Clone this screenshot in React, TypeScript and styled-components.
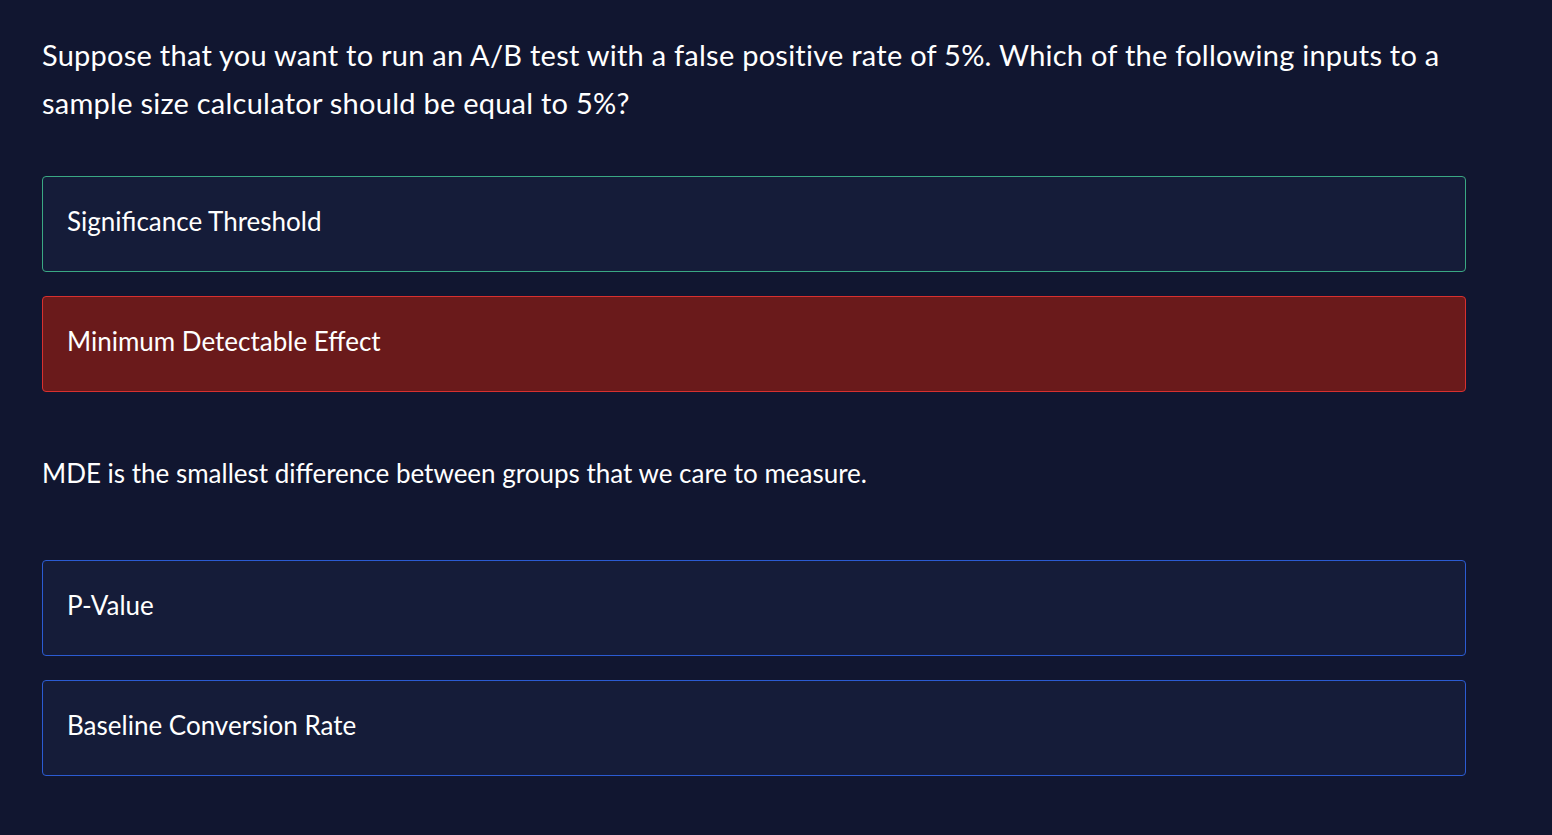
import React from "react";
import styled, { createGlobalStyle } from "styled-components";

const Global = createGlobalStyle`
  html, body { margin: 0; padding: 0; background: #111630; }
  body { font-family: "Lato", "Liberation Sans", sans-serif; color: #ffffff; }
`;

const Page = styled.main`
  min-height: 835px;
  box-sizing: border-box;
  padding: 31px 86px 40px 42px;
  display: flex;
  flex-direction: column;
`;

const Question = styled.h2`
  margin: 0 0 49px 0;
  max-width: 1420px;
  font-size: 29px;
  line-height: 48px;
  font-weight: 400;
  letter-spacing: 0.25px;
  color: #ffffff;
`;

const Options = styled.div`
  display: flex;
  flex-direction: column;
  gap: 24px;
`;

type Variant = "correct" | "wrong" | "neutral";

const Option = styled.div<{ $variant: Variant }>`
  box-sizing: border-box;
  height: 96px;
  display: flex;
  align-items: center;
  padding: 0 24px 6px;
  border-radius: 4px;
  border: 1px solid
    ${(p) =>
      p.$variant === "correct" ? "#3aa883" : p.$variant === "wrong" ? "#d8302f" : "#2b5bd2"};
  background: ${(p) => (p.$variant === "wrong" ? "#6a1a1b" : "#151c39")};
  font-size: 26px;
  color: #ffffff;
`;

const Feedback = styled.p`
  margin: 65px 0 71px 0;
  font-size: 26px;
  line-height: 32px;
  color: #ffffff;
`;

export default function App() {
  return (
    <>
      <Global />
      <Page>
        <Question>
          Suppose that you want to run an A/B test with a false positive rate of 5%. Which of the
          following inputs to a sample size calculator should be equal to 5%?
        </Question>
        <Options>
          <Option $variant="correct">Significance Threshold</Option>
          <Option $variant="wrong">Minimum Detectable Effect</Option>
        </Options>
        <Feedback>MDE is the smallest difference between groups that we care to measure.</Feedback>
        <Options>
          <Option $variant="neutral">P-Value</Option>
          <Option $variant="neutral">Baseline Conversion Rate</Option>
        </Options>
      </Page>
    </>
  );
}
